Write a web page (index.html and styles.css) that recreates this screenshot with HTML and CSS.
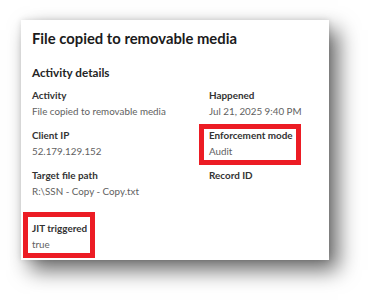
FILE: index.html
```html
<!DOCTYPE html>
<html>
<head>
<meta charset="utf-8">
<link rel="stylesheet" href="styles.css">
</head>
<body>
<div class="card">
  <h1 class="title">File copied to removable media</h1>
  <h2 class="section">Activity details</h2>
  <div class="grid">
    <div class="field">
      <div class="label">Activity</div>
      <div class="value">File copied to removable media</div>
    </div>
    <div class="field">
      <div class="label">Happened</div>
      <div class="value">Jul 21, 2025 9:40 PM</div>
    </div>
    <div class="field">
      <div class="label">Client IP</div>
      <div class="value">52.179.129.152</div>
    </div>
    <div class="field mark mark-enf">
      <div class="label">Enforcement mode</div>
      <div class="value">Audit</div>
    </div>
    <div class="field">
      <div class="label">Target file path</div>
      <div class="value">R:\SSN - Copy - Copy.txt</div>
    </div>
    <div class="field">
      <div class="label">Record ID</div>
      <div class="value"></div>
    </div>
    <div class="field mark mark-jit jit">
      <div class="label">JIT triggered</div>
      <div class="value">true</div>
    </div>
  </div>
</div>
</body>
</html>
```

FILE: styles.css
```css
html, body {
  margin: 0;
  padding: 0;
  background: #ffffff;
}
body {
  width: 371px;
  height: 302px;
  overflow: hidden;
  font-family: Lato, "Noto Sans", sans-serif;
}
.card {
  box-sizing: border-box;
  margin: 20px 0 0 21px;
  width: 308px;
  height: 240px;
  background: #ffffff;
  padding: 7px 11px 0 11px;
  box-shadow: 9px 10px 20px rgba(0, 0, 0, 0.6), 0 0 6px rgba(0, 0, 0, 0.12);
}
.title {
  margin: 0;
  font-size: 14.8px;
  line-height: 22px;
  font-weight: 700;
  color: #1b1b1b;
}
.section {
  margin: 15px 0 0 0;
  font-size: 11.7px;
  line-height: 16px;
  font-weight: 700;
  color: #242424;
}
.grid {
  margin-top: 7px;
  display: grid;
  grid-template-columns: 177px 1fr;
  row-gap: 8px;
}
.field {
  position: relative;
}
.label {
  font-size: 9.9px;
  line-height: 16px;
  font-weight: 700;
  color: #333333;
}
.value {
  font-size: 9.8px;
  line-height: 16px;
  min-height: 16px;
  color: #616161;
}
.jit {
  margin-top: 13px;
}
.mark::before {
  content: "";
  position: absolute;
  border: 5px solid #ec1c24;
  box-sizing: border-box;
}
.mark-enf::before {
  left: -10px;
  top: -3px;
  width: 102px;
  height: 41px;
}
.mark-jit::before {
  left: -9px;
  top: -8px;
  width: 72px;
  height: 46px;
}
```
